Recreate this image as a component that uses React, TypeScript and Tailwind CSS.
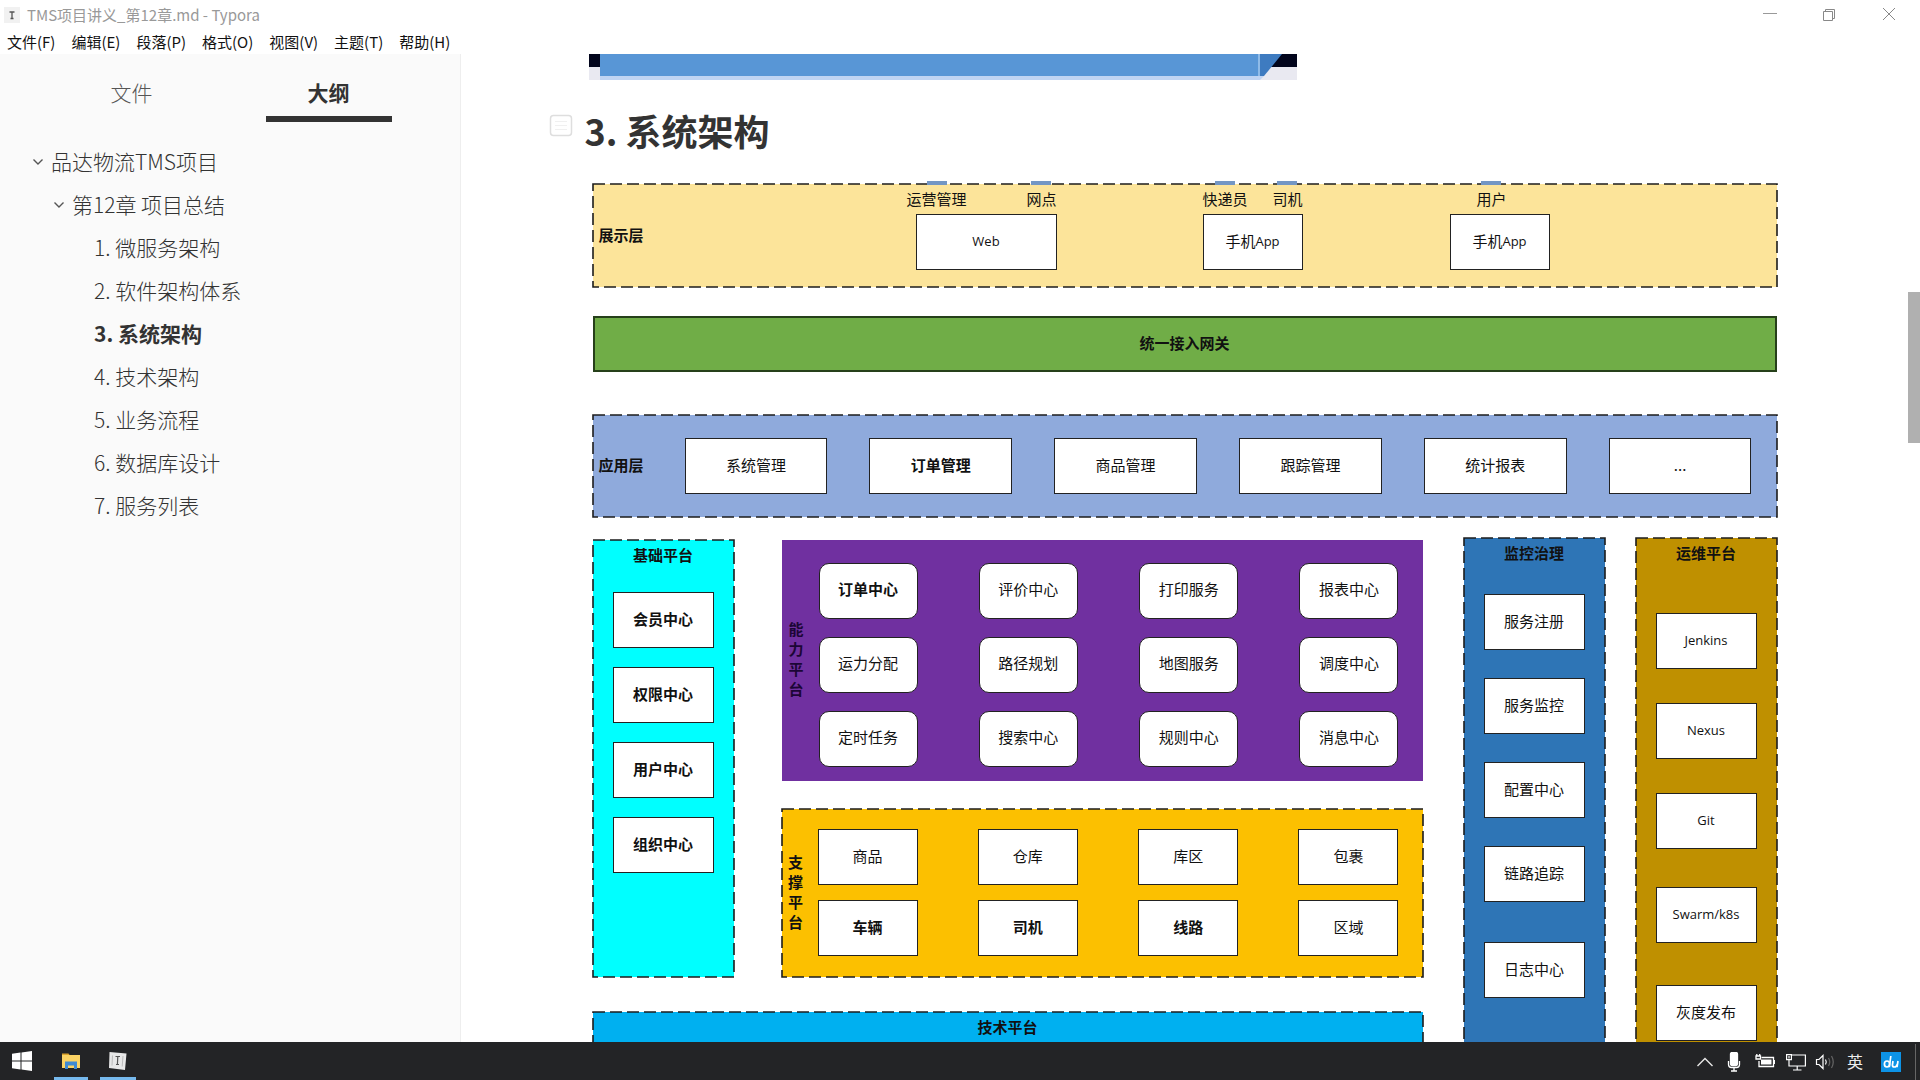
import React from 'react';

const menus = ['文件(F)', '编辑(E)', '段落(P)', '格式(O)', '视图(V)', '主题(T)', '帮助(H)'];

const chapters = [
  '1. 微服务架构',
  '2. 软件架构体系',
  '3. 系统架构',
  '4. 技术架构',
  '5. 业务流程',
  '6. 数据库设计',
  '7. 服务列表',
];

const apps = ['系统管理', '订单管理', '商品管理', '跟踪管理', '统计报表', '...'];
const basics = ['会员中心', '权限中心', '用户中心', '组织中心'];

const abilities = [
  ['订单中心', '评价中心', '打印服务', '报表中心'],
  ['运力分配', '路径规划', '地图服务', '调度中心'],
  ['定时任务', '搜索中心', '规则中心', '消息中心'],
];

const supports = [
  ['商品', '仓库', '库区', '包裹'],
  ['车辆', '司机', '线路', '区域'],
];

const boldNodes = ['订单管理', '订单中心', '车辆', '司机', '线路', ...basics];

// 虚线边框
const Dashes: React.FC = () => (
  <svg className="absolute inset-0 h-full w-full overflow-visible" aria-hidden="true">
    <rect width="100%" height="100%" fill="none" stroke="#1c1c1c" strokeWidth="1.6" strokeDasharray="12 5" />
  </svg>
);

const Box: React.FC<{ className?: string; children: React.ReactNode }> = ({ className = '', children }) => {
  const bold = typeof children === 'string' && boldNodes.includes(children);
  return (
    <div
      className={`flex h-14 items-center justify-center border border-[#222] bg-white pb-[3px] ${bold ? 'font-bold' : ''} ${className}`}
    >
      {children}
    </div>
  );
};

const Latin: React.FC<{ children: React.ReactNode }> = ({ children }) => (
  <span className="font-['Open_Sans',sans-serif] text-[13px]">{children}</span>
);

const Chevron: React.FC = () => (
  <svg className="h-3 w-3 shrink-0" viewBox="0 0 12 12" fill="none" stroke="#555" strokeWidth="1.4">
    <path d="M1.5 3.5L6 8l4.500-4.500" />
  </svg>
);

const Caption: React.FC<{ className?: string; children: React.ReactNode }> = ({ className = '', children }) => (
  <div className={`relative ${className}`}>
    {children}
    <span className="absolute -top-2 left-1/2 h-1 w-5 -translate-x-1/2 bg-[#7396c4]" />
  </div>
);

const TitleBar: React.FC = () => (
  <header className="shrink-0 bg-white">
    <div className="flex h-[30px] items-center justify-between pl-1 text-[15px] text-[#999]">
      <div className="flex items-center gap-[7px]">
        <svg className="h-4 w-4" viewBox="0 0 16 16" fill="none">
          <rect width="16" height="16" fill="#f1f1f1" />
          <path d="M5.500 5h5M8 5v6.500M6.500 11.500h3" stroke="#555" strokeWidth="1.300" />
        </svg>
        <span>TMS项目讲义_第12章.md - Typora</span>
      </div>
      <div className="flex">
        <button aria-label="最小化" className="flex h-[30px] w-[60px] items-center justify-center">
          <svg className="h-4 w-4" viewBox="0 0 16 16" stroke="#999"><path d="M1 6.500h14" /></svg>
        </button>
        <button aria-label="还原" className="flex h-[30px] w-[58px] items-center justify-center">
          <svg className="h-4 w-4" viewBox="0 0 16 16" fill="none" stroke="#888">
            <path d="M2.500 4.500h9v9h-9zM4.500 4.500v-2h9v9h-2" />
          </svg>
        </button>
        <button aria-label="关闭" className="flex h-[30px] w-[62px] items-center justify-center">
          <svg className="h-4 w-4" viewBox="0 0 16 16" stroke="#888"><path d="M2 1l12 12M14 1L2 13" /></svg>
        </button>
      </div>
    </div>
    <nav className="flex h-6 items-center gap-4 px-[7px] text-[15px] text-[#111]">
      {menus.map((m) => (
        <button key={m} className="leading-6">{m}</button>
      ))}
    </nav>
  </header>
);

const Sidebar: React.FC = () => (
  <aside className="w-[461px] shrink-0 border-r border-[#eee] bg-[#fafafa] text-[21px] text-[#333]">
    <div className="grid grid-cols-2 px-[33px] pt-4">
      <button className="flex h-[52px] items-start justify-center pt-[7px] font-light text-[#555]">文件</button>
      <div className="flex justify-center">
        <button className="flex h-[52px] w-[126px] items-start justify-center border-b-6 border-[#333] pt-[7px] font-bold">
          大纲
        </button>
      </div>
    </div>
    <nav className="mt-[18px] font-light leading-[43px]">
      <a href="#tms" className="flex items-center gap-[7px] pl-8">
        <Chevron />
        品达物流TMS项目
      </a>
      <a href="#ch12" className="flex items-center gap-[7px] pl-[53px]">
        <Chevron />
        第12章 项目总结
      </a>
      {chapters.map((c) => (
        <a key={c} href="#arch" className={`block pl-[94px] ${c.startsWith('3') ? 'font-bold' : ''}`}>
          {c}
        </a>
      ))}
    </nav>
  </aside>
);

const Diagram: React.FC = () => (
  <div className="px-1 text-[15px] leading-5 text-[#111]">
    <section className="relative flex h-[103px] items-center bg-[#fce49a]">
      <Dashes />
      <h3 className="w-[314px] shrink-0 pb-[2px] pl-[6px] font-bold">展示层</h3>
      <div className="w-[150px] self-start pt-[5px]">
        <div className="flex justify-between">
          <Caption>运营管理</Caption>
          <Caption>网点</Caption>
        </div>
        <Box className="mt-[5px] ml-[9px]"><Latin>Web</Latin></Box>
      </div>
      <div className="ml-[146px] w-[100px] self-start pt-[5px]">
        <div className="flex justify-between">
          <Caption>快递员</Caption>
          <Caption>司机</Caption>
        </div>
        <Box className="mt-[5px]">手机<Latin>App</Latin></Box>
      </div>
      <div className="ml-[147px] w-[100px] self-start pt-[5px]">
        <div className="flex justify-center pr-4">
          <Caption>用户</Caption>
        </div>
        <Box className="mt-[5px]">手机<Latin>App</Latin></Box>
      </div>
    </section>

    <section className="mt-[29px] flex h-14 items-center justify-center border-2 border-[#26401a] bg-[#70ad47]">
      <h3 className="pb-[2px] font-bold">统一接入网关</h3>
    </section>

    <section className="relative mt-[43px] flex h-[102px] items-center bg-[#8faadc] pr-[25px]">
      <Dashes />
      <h3 className="w-[92px] shrink-0 pb-[2px] pl-[6px] font-bold">应用层</h3>
      <div className="grid flex-1 grid-cols-6 gap-[42px]">
        {apps.map((a) => (
          <Box key={a}>{a}</Box>
        ))}
      </div>
    </section>

    <div className="mt-[21px] flex items-start">
      <div className="mt-[2px] w-[830px] shrink-0">
        <div className="flex justify-between">
          <section className="relative h-[437px] w-[141px] bg-[#0ff] px-5 pt-[5px]">
            <Dashes />
            <h3 className="text-center font-bold">基础平台</h3>
            <div className="mt-[27px] flex flex-col gap-[19px]">
              {basics.map((b) => (
                <Box key={b}>{b}</Box>
              ))}
            </div>
          </section>
          <div className="w-[641px]">
            <section className="flex h-[241px] items-center bg-[#7030a0] pr-6 pt-2">
              <h3 className="flex w-[37px] shrink-0 justify-center pr-2 pb-3 text-center font-bold text-[#1c0636]">
                <span className="w-4">能力平台</span>
              </h3>
              <div className="flex flex-1 flex-col gap-[18px]">
                {abilities.map((row) => (
                  <div key={row[0]} className="flex justify-between">
                    {row.map((n) => (
                      <Box key={n} className="w-[99px] rounded-[10px]">{n}</Box>
                    ))}
                  </div>
                ))}
              </div>
            </section>
            <section className="relative mt-7 flex h-[168px] items-center bg-[#fcc000] pr-6">
              <Dashes />
              <h3 className="flex w-9 shrink-0 justify-center pr-2 pb-[2px] text-center font-bold">
                <span className="w-4">支撑平台</span>
              </h3>
              <div className="flex flex-1 flex-col gap-[15px] pb-px">
                {supports.map((row) => (
                  <div key={row[0]} className="flex justify-between">
                    {row.map((n) => (
                      <Box key={n} className="w-[100px]">{n}</Box>
                    ))}
                  </div>
                ))}
              </div>
            </section>
          </div>
        </div>
        <section className="relative mt-[35px] h-20 bg-[#00b0f0] pt-[5px] text-center">
          <Dashes />
          <h3 className="font-bold">技术平台</h3>
        </section>
      </div>

      <section className="relative ml-[41px] h-[560px] w-[141px] shrink-0 bg-[#2e75b6] px-5 pt-[5px]">
        <Dashes />
        <h3 className="text-center font-bold">监控治理</h3>
        <div className="mt-[31px] flex flex-col gap-7">
          <Box>服务注册</Box>
          <Box>服务监控</Box>
          <Box>配置中心</Box>
          <Box>链路追踪</Box>
          <Box className="mt-3">日志中心</Box>
        </div>
      </section>

      <section className="relative ml-[31px] h-[560px] w-[141px] shrink-0 bg-[#bf9000] px-5 pt-[5px]">
        <Dashes />
        <h3 className="text-center font-bold">运维平台</h3>
        <div className="mt-[50px] flex flex-col gap-[34px]">
          <Box><Latin>Jenkins</Latin></Box>
          <Box><Latin>Nexus</Latin></Box>
          <Box><Latin>Git</Latin></Box>
          <Box className="mt-1"><Latin>Swarm/k8s</Latin></Box>
          <Box className="mt-2">灰度发布</Box>
        </div>
      </section>
    </div>
  </div>
);

const Taskbar: React.FC = () => (
  <footer className="flex h-[38px] shrink-0 items-stretch justify-between bg-[#232426]">
    <div className="flex">
      <button aria-label="开始" className="flex w-11 items-center justify-center">
        <svg className="h-5 w-5" viewBox="0 0 20 20" fill="#fff">
          <path d="M0 2.800L8.500 1.600v7.900H0zM9.500 1.400L20 0v9.500H9.500zM0 10.500h8.500v7.900L0 17.200zM9.500 10.500H20V20L9.500 18.600z" />
        </svg>
      </button>
      <button aria-label="资源管理器" className="ml-[10px] flex w-[34px] items-center justify-center border-b-3 border-[#76b9ed] pt-[2px]">
        <svg className="h-5 w-5" viewBox="0 0 20 20">
          <path d="M1 2.500h6.500L9 4.500H1z" fill="#dba32c" />
          <path d="M1 4h18v13H1z" fill="#fbd364" />
          <path d="M4 18v-7.500h12V18h-3v-3.500H7V18z" fill="#3f8ad2" />
        </svg>
      </button>
      <button aria-label="Typora" className="ml-3 flex w-9 items-center justify-center border-b-3 border-[#76b9ed] pt-[2px]">
        <svg className="h-5 w-5" viewBox="0 0 20 20">
          <path d="M1.500 1L18.500 2.500 17 19 1 17z" fill="#e8e8e8" />
          <path d="M4.500 4.500L4 14.500M15 5l-.8 10.500" stroke="#bbb" fill="none" />
          <path d="M7.500 5.500h4.500M9.800 5.500L9.400 13.500M8 13.500h3" stroke="#555" strokeWidth="1.200" fill="none" />
        </svg>
      </button>
    </div>
    <div className="flex items-center pt-px">
      <button aria-label="显示隐藏的图标" className="flex w-7 justify-center">
        <svg className="h-5 w-5" viewBox="0 0 20 20" fill="none" stroke="#e8e8e8" strokeWidth="1.400"><path d="M2.500 14L10 6.500l7.500 7.500" /></svg>
      </button>
      <button aria-label="麦克风" className="flex w-[30px] justify-center">
        <svg className="h-5 w-5" viewBox="0 0 20 20" fill="none" stroke="#fff" strokeWidth="1.300">
          <rect x="6.500" y="0.500" width="7" height="13" rx="1.500" fill="#fff" />
          <path d="M4.500 9v3.500q0 3 3 3h5q3 0 3-3V9M10 15.500V19M7 19h6" />
        </svg>
      </button>
      <button aria-label="电池" className="flex w-8 justify-center">
        <svg className="h-5 w-5" viewBox="0 0 20 20" fill="none" stroke="#fff" strokeWidth="1.300">
          <path d="M6.500 5.500H18.500v9H4V9" />
          <rect x="6" y="7.500" width="10.500" height="5" fill="#fff" stroke="none" />
          <path d="M19.400 8v4M1 4h4.500v3H1zM1.800 4V2M4.700 4V2" />
        </svg>
      </button>
      <button aria-label="网络" className="flex w-[29px] justify-center">
        <svg className="h-5 w-5" viewBox="0 0 20 20" fill="none" stroke="#fff" strokeWidth="1.200">
          <path d="M6 3h13.400v11H3V8M7 18h8.500M11.200 14v4M.6 2.600h4.800v5H.6zM3 4v2.500" />
        </svg>
      </button>
      <button aria-label="音量" className="flex w-[29px] justify-center">
        <svg className="h-5 w-5" viewBox="0 0 20 20" fill="none" stroke="#fff" strokeWidth="1.200">
          <path d="M1.500 7.500H4l4-4v13l-4-4H1.500zM10.500 7.500q1.500 2.500 0 5" />
          <path d="M13.500 6q2.500 4 0 8M16.500 4q3.500 6 0 12" stroke="#666" />
        </svg>
      </button>
      <button className="mr-[10px] w-8 pb-[2px] text-center text-base text-[#eee]">英</button>
      <button aria-label="du" className="flex w-5 justify-center">
        <svg className="h-5 w-5" viewBox="0 0 20 20" fill="none">
          <rect width="20" height="20" fill="#0d93e6" />
          <g stroke="#fff" strokeWidth="1.700">
            <ellipse cx="6" cy="12" rx="2.600" ry="3" />
            <path d="M9.800 4L8.300 15.200M12 9l-.6 4q0 2 2 2 2 0 2.700-2.500M17 9l-1 6.200" />
          </g>
        </svg>
      </button>
      <span className="mr-1 ml-[14px] h-9 w-px bg-[#666]" />
    </div>
  </footer>
);

const App: React.FC = () => {
  return (
    <div className="flex h-screen flex-col overflow-hidden bg-white font-['Noto_Sans_CJK_SC',sans-serif]">
      <TitleBar />
      <div className="flex min-h-0 flex-1">
        <Sidebar />
        <main className="min-w-0 flex-1 overflow-hidden">
          <div className="mx-auto max-w-[1192px]">
            <svg className="h-[26px] w-[708px]" viewBox="0 0 708 26" preserveAspectRatio="none">
              <rect width="708" height="26" fill="#e9e9f1" />
              <rect width="708" height="13" fill="#02051c" />
              <path d="M11 0H693L675 22H11z" fill="#3e7bc0" />
              <path d="M11 0H670V22H11z" fill="#5896d6" />
              <path d="M670 0V22" stroke="#8fbbe8" strokeWidth="2" />
              <path d="M11 22H675L671 26H11z" fill="#bfd4f3" />
            </svg>
            <div className="relative pt-[22px] pb-[26px]">
              <svg className="absolute top-[34px] -left-10 h-6 w-6" viewBox="0 0 24 24" fill="#fff" stroke="#dedede">
                <rect x="1.500" y="1.500" width="21" height="20" rx="3" strokeWidth="1.500" />
                <path d="M6 7.500h12M6 11.500h12M6 15.500h12" stroke="#f0f0f0" />
              </svg>
              <h2 id="arch" className="-ml-1 text-4xl leading-[56px] font-bold text-[#333]">3. 系统架构</h2>
            </div>
            <Diagram />
          </div>
        </main>
        <div className="w-3 shrink-0 pt-[238px]">
          <div className="h-[151px] bg-[#b0b0b0]" />
        </div>
      </div>
      <Taskbar />
    </div>
  );
};

export default App;
